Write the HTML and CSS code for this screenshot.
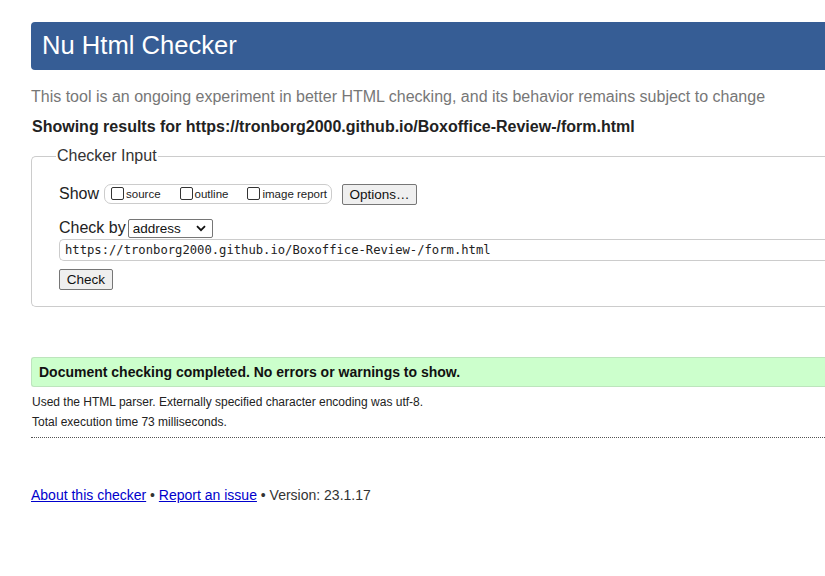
FILE: index.html
```html
<!DOCTYPE html>
<html lang="en">
<head>
<meta charset="utf-8">
<title>Nu Html Checker</title>
<link rel="stylesheet" href="styles.css">
</head>
<body>
<div class="page">
  <h1 class="masthead">Nu Html Checker</h1>
  <p class="tagline">This tool is an ongoing experiment in better HTML checking, and its behavior remains subject to change</p>
  <p class="results-for">Showing results for https://tronborg2000.github.io/Boxoffice-Review-/form.html</p>
  <form class="checker-form">
    <fieldset class="checker-input">
      <legend class="legend">Checker Input</legend>
      <div class="row show-row">
        <span class="label">Show</span>
        <span class="show-group">
          <label class="opt"><input type="checkbox" class="cb">source</label>
          <label class="opt"><input type="checkbox" class="cb">outline</label>
          <label class="opt"><input type="checkbox" class="cb">image report</label>
        </span>
        <button type="button" class="btn options-btn">Options…</button>
      </div>
      <div class="row checkby-row">
        <span class="label">Check by</span>
        <span class="select">address<svg class="chev" width="10" height="7" viewBox="0 0 10 7"><path d="M1 1.2 L5 5.2 L9 1.2" fill="none" stroke="#111" stroke-width="1.8"/></svg></span>
      </div>
      <div class="url-input">https://tronborg2000.github.io/Boxoffice-Review-/form.html</div>
      <div class="row"><button type="button" class="btn check-btn">Check</button></div>
    </fieldset>
  </form>
  <p class="success">Document checking completed. No errors or warnings to show.</p>
  <p class="details">Used the HTML parser. Externally specified character encoding was utf-8.</p>
  <p class="details">Total execution time 73 milliseconds.</p>
  <hr class="dotted">
  <p class="footer"><a href="#">About this checker</a> • <a href="#">Report an issue</a> • Version: 23.1.17</p>
</div>
</body>
</html>
```
FILE: styles.css
```css
html { overflow: hidden; }
body {
  margin: 0;
  font-family: "Liberation Sans", Arial, sans-serif;
  color: #222;
  background: #fff;
}
.page {
  width: 1100px;
  padding: 22px 0 0 31px;
}
.masthead {
  margin: 0;
  height: 48px;
  box-sizing: border-box;
  padding: 8px 0 0 11px;
  background: #365d95;
  color: #fff;
  font-size: 25.6px;
  font-weight: normal;
  line-height: 30px;
  border-radius: 4px 0 0 4px;
}
.tagline {
  margin: 17px 0 0 0;
  font-size: 16px;
  line-height: 20px;
  color: #777;
}
.results-for {
  margin: 10px 0 0 1px;
  font-size: 16px;
  line-height: 20px;
  font-weight: bold;
  color: #222;
}
.checker-form { margin: 10px 0 0 0; }
.checker-input {
  margin: 0;
  padding: 18px 27px 16px 27px;
  border: 1px solid #ccc;
  border-radius: 5px 0 0 5px;
  border-right: none;
}
.legend {
  padding: 0 1px;
  margin-left: -3px;
  font-size: 16px;
  color: #333;
}
.row {
  display: flex;
  align-items: center;
}
.label {
  font-size: 16px;
  color: #222;
}
.show-row { height: 22px; }
.show-group {
  margin-left: 5px;
  display: inline-flex;
  align-items: center;
  height: 18px;
  padding: 0 4px 0 6px;
  border: 1px solid #ccc;
  border-radius: 7px;
  font-size: 11.5px;
  gap: 19px;
}
.opt {
  display: inline-flex;
  align-items: center;
  color: #222;
}
.cb {
  appearance: none;
  width: 13px;
  height: 13px;
  margin: 0 2px 2px 0;
  border: 1px solid #333;
  border-radius: 2px;
  background: #fff;
}
.btn {
  font-family: "Liberation Sans", Arial, sans-serif;
  font-size: 13.5px;
  color: #111;
  background: #efefef;
  border: 1px solid #767676;
  border-radius: 2px;
  padding: 0 6px;
  height: 21px;
  line-height: 19px;
}
.options-btn { margin-left: 10px; width: 75px; }
.checkby-row { margin-top: 13px; height: 20px; }
.select {
  margin-left: 2px;
  width: 85px;
  height: 19px;
  box-sizing: border-box;
  border: 1px solid #767676;
  border-radius: 2px;
  display: inline-flex;
  align-items: center;
  justify-content: space-between;
  padding: 0 6px 0 4px;
  font-size: 13.5px;
  color: #111;
}
.url-input {
  margin-top: 1px;
  height: 22px;
  box-sizing: border-box;
  border: 1px solid #ccc;
  border-right: none;
  border-radius: 5px 0 0 5px;
  padding: 0 5px;
  font-family: "DejaVu Sans Mono", "Liberation Mono", monospace;
  font-size: 12.2px;
  line-height: 20px;
  color: #222;
}
.check-btn { margin-top: 8px; width: 54px; padding: 0; }
.success {
  margin: 50px 0 0 0;
  height: 30px;
  box-sizing: border-box;
  padding: 0 7px;
  background: #ccffcc;
  border: 1px solid #bde5bd;
  border-right: none;
  border-radius: 3px 0 0 3px;
  font-size: 14px;
  font-weight: bold;
  line-height: 28px;
  color: #111;
}
.details {
  margin: 8px 0 0 1px;
  font-size: 12px;
  line-height: 14px;
  color: #222;
}
.details + .details { margin-top: 6px; }
.dotted {
  margin: 8px 0 0 0;
  border: none;
  border-top: 1px dotted #555;
  height: 0;
}
.footer {
  margin: 48px 0 0 0;
  font-size: 14px;
  line-height: 18px;
  color: #333;
}
.footer a { color: #00c; }
```
